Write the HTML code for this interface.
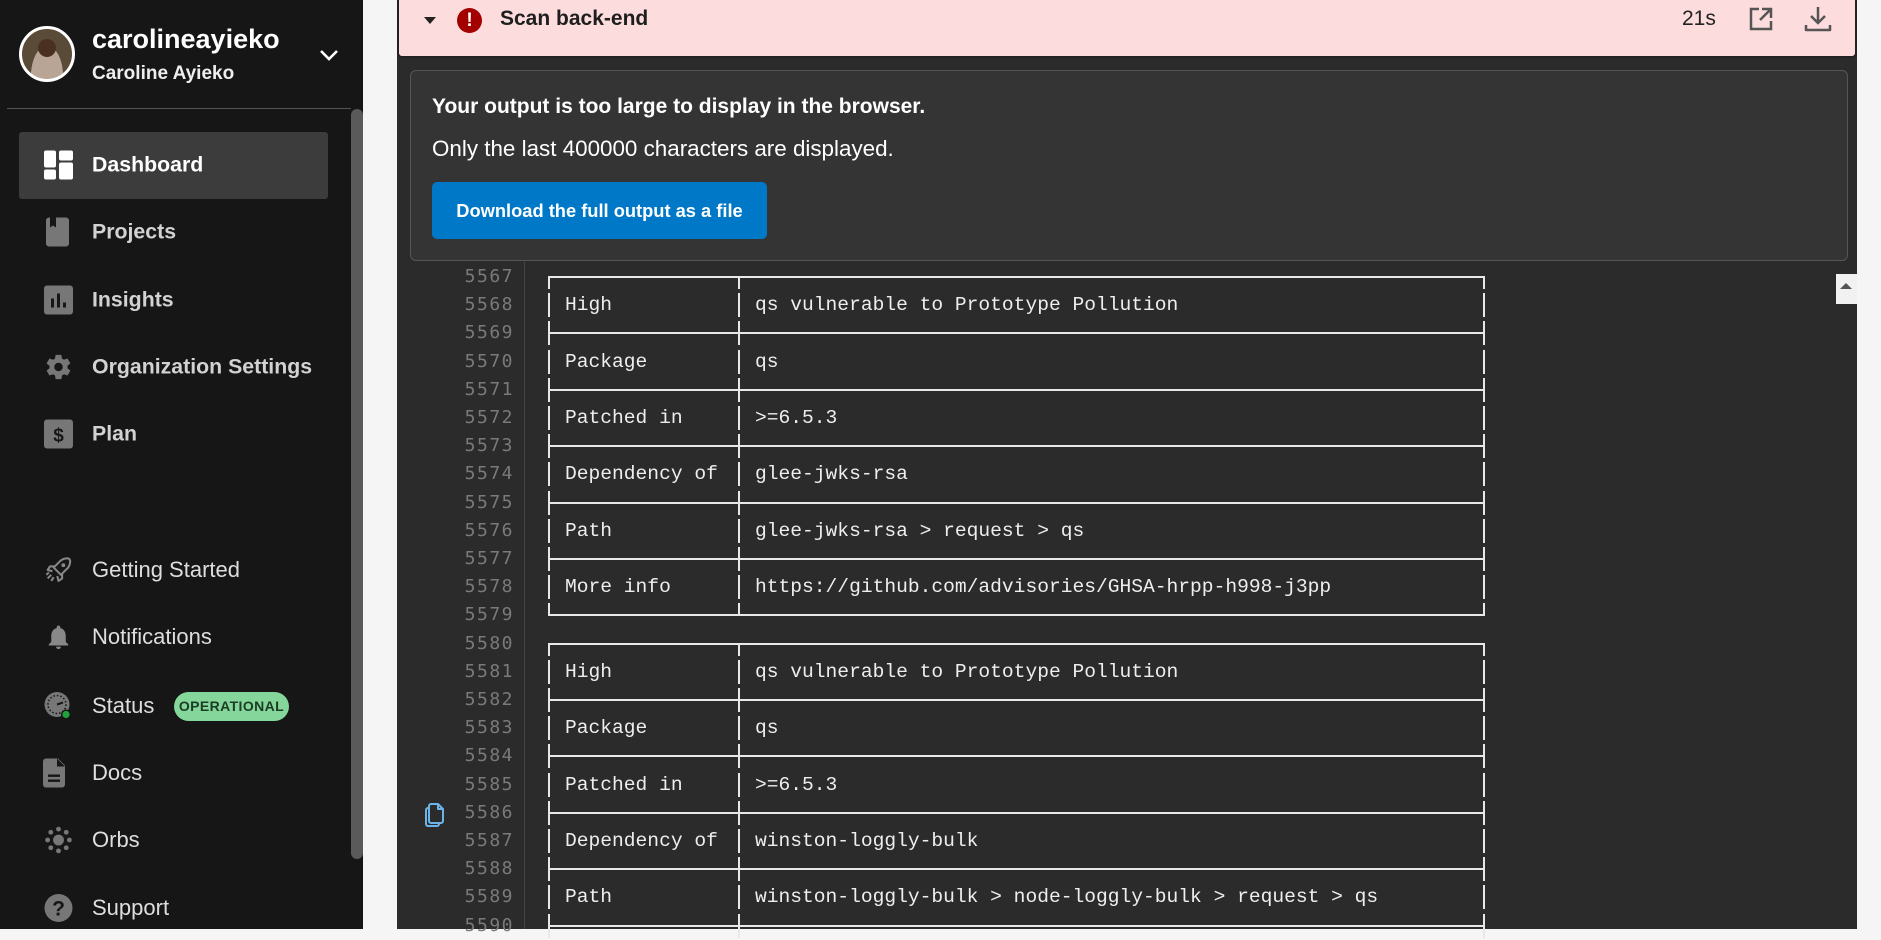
<!DOCTYPE html>
<html><head><meta charset="utf-8">
<style>
*{margin:0;padding:0;box-sizing:border-box}
body{width:1881px;height:929px;overflow:hidden;background:#f5f5f5;font-family:"Liberation Sans",Arial,sans-serif;position:relative}
.sb{position:absolute;left:0;top:0;width:363px;height:929px;background:#161616}
.abs{position:absolute}
.nav{position:absolute;left:92px;font-size:21.3px;font-weight:bold;color:#d2d2d2;transform:translateY(-50%);white-space:nowrap}
.nav.n{font-weight:normal;color:#dedede;font-size:22px}
.ic{position:absolute;left:44px;transform:translateY(-50%)}
.main{position:absolute;left:397px;top:0;width:1460px;height:929px;background:#2b2b2b}
.hdr{position:absolute;left:397px;top:0;width:1460px;height:58px;background:#fcdcdc;border:2px solid #222;border-top:none;border-radius:0 0 5px 5px}
.ln{position:absolute;left:0;width:1460px;height:28.2px}
.num{position:absolute;left:430px;width:84px;text-align:right;font-family:"DejaVu Sans Mono","Liberation Mono",monospace;font-size:18px;color:#7a7a7a;top:3px;letter-spacing:1.5px}
.tx{position:absolute;top:3px;font-family:"Liberation Mono","Courier New",monospace;font-size:19.6px;color:#eee;white-space:pre}
.v{position:absolute;width:2px;background:#e8e8e8}
.h{position:absolute;left:548px;width:937px;height:2px;background:#e8e8e8;top:13px}
</style></head><body>
<div class="sb">
  <div class="abs" style="left:19px;top:26px;width:56px;height:56px;border-radius:50%;border:3px solid #fff;background:radial-gradient(circle at 50% 38%,#4a3020 0 22%,transparent 23%),radial-gradient(ellipse at 50% 95%,#b8a595 0 45%,transparent 46%),#5a4a38;overflow:hidden"></div>
  <div class="abs" style="left:92px;top:24px;font-size:27px;font-weight:bold;color:#fff">carolineayieko</div>
  <div class="abs" style="left:92px;top:63px;font-size:19px;font-weight:bold;color:#eee">Caroline Ayieko</div>
  <svg class="abs" style="left:318px;top:48px" width="22" height="14" viewBox="0 0 22 14"><path d="M3 3l8 8 8-8" stroke="#fff" stroke-width="2.6" fill="none"/></svg>
  <div class="abs" style="left:7px;top:108px;width:344px;height:1px;background:#555"></div>
  <div class="abs" style="left:351px;top:109px;width:12px;height:750px;background:#5a5a5a;border-radius:6px"></div>
  <div class="abs" style="left:19px;top:132px;width:309px;height:67px;background:#3c3c3c;border-radius:3px"></div>

  <svg class="ic" style="top:165px" width="29" height="29" viewBox="0 0 29 29"><rect x="0" y="0" width="12" height="17" rx="2" fill="#fff"/><rect x="15" y="0" width="14" height="10" rx="2" fill="#fff"/><rect x="0" y="19" width="12" height="10" rx="2" fill="#fff"/><rect x="15" y="12" width="14" height="17" rx="2" fill="#fff"/></svg>
  <div class="nav" style="top:165px;color:#fff">Dashboard</div>

  <svg class="ic" style="top:232px;left:46px" width="24" height="29" viewBox="0 0 24 29"><rect width="23" height="29" rx="3" fill="#777"/><path d="M4 0h6v10l-3-2-3 2z" fill="#161616"/></svg>
  <div class="nav" style="top:232px">Projects</div>

  <svg class="ic" style="top:300px" width="29" height="29" viewBox="0 0 29 29"><rect width="29" height="29" rx="3" fill="#777"/><rect x="7" y="13" width="3" height="9" fill="#161616"/><rect x="13" y="8" width="3" height="14" fill="#161616"/><rect x="19" y="17" width="3" height="5" fill="#161616"/></svg>
  <div class="nav" style="top:300px">Insights</div>

  <svg class="ic" style="top:367px" width="29" height="29" viewBox="0 0 24 24"><path fill="#777" d="M19.4 13c.04-.3.06-.65.06-1s-.02-.7-.06-1l2.1-1.65c.2-.15.24-.42.12-.64l-2-3.46c-.12-.22-.39-.3-.61-.22l-2.49 1c-.52-.4-1.08-.73-1.69-.98l-.38-2.65A.49.49 0 0 0 14 2h-4c-.25 0-.46.18-.49.42l-.38 2.65c-.61.25-1.17.59-1.69.98l-2.49-1c-.23-.09-.49 0-.61.22l-2 3.46c-.13.22-.07.49.12.64L4.57 11c-.04.32-.07.66-.07 1s.03.68.07 1l-2.11 1.65c-.19.15-.24.42-.12.64l2 3.46c.12.22.39.3.61.22l2.49-1c.52.4 1.08.73 1.69.98l.38 2.65c.03.24.24.42.49.42h4c.25 0 .46-.18.49-.42l.38-2.65c.61-.25 1.17-.59 1.69-.98l2.49 1c.23.09.49 0 .61-.22l2-3.46c.12-.22.07-.49-.12-.64zM12 15.5a3.5 3.5 0 1 1 0-7 3.5 3.5 0 0 1 0 7z"/></svg>
  <div class="nav" style="top:367px">Organization Settings</div>

  <svg class="ic" style="top:434px" width="29" height="29" viewBox="0 0 29 29"><rect width="29" height="29" rx="3" fill="#777"/><text x="14.5" y="22" text-anchor="middle" font-family="Liberation Sans" font-weight="bold" font-size="19" fill="#161616">$</text></svg>
  <div class="nav" style="top:434px">Plan</div>

  <svg class="ic" style="top:570px" width="29" height="29" viewBox="0 0 24 24"><path d="M14 4c3-2 6-2 7-1 1 1 1 4-1 7l-6 6-6-6zM9 9l-4 0-2 3 4 1M15 15l0 4-3 2-1-4M6 16l-3 3M8 18l-2 3M4 14l-2 2" stroke="#888" stroke-width="1.7" fill="none" stroke-linejoin="round"/><circle cx="16" cy="8" r="1.6" fill="#888"/></svg>
  <div class="nav n" style="top:570px">Getting Started</div>

  <svg class="ic" style="top:637px" width="29" height="29" viewBox="0 0 24 24"><path fill="#888" d="M12 22c1.1 0 2-.9 2-2h-4c0 1.1.9 2 2 2zm6-6v-5c0-3.07-1.64-5.64-4.5-6.32V4c0-.83-.67-1.5-1.5-1.5s-1.5.67-1.5 1.5v.68C7.63 5.36 6 7.92 6 11v5l-2 2v1h16v-1z"/></svg>
  <div class="nav n" style="top:637px">Notifications</div>

  <svg class="ic" style="top:706px" width="29" height="29" viewBox="0 0 29 29"><circle cx="13" cy="13" r="12.5" fill="#777"/><circle cx="13" cy="13" r="9" fill="none" stroke="#161616" stroke-width="1.5" stroke-dasharray="1.5 2"/><path d="M13 13l6-2" stroke="#161616" stroke-width="2"/><circle cx="22" cy="23" r="5" fill="#161616"/><circle cx="22" cy="23" r="3.6" fill="#1fa33a"/></svg>
  <div class="nav n" style="top:706px">Status</div>
  <div class="abs" style="left:174px;top:692px;width:115px;height:29px;border-radius:15px;background:#85d69a;color:#1c3d24;font-size:14px;font-weight:bold;text-align:center;line-height:29px;letter-spacing:.4px">OPERATIONAL</div>

  <svg class="ic" style="top:773px;left:43px" width="24" height="29" viewBox="0 0 24 29"><path d="M3 0h12l7 7v19a3 3 0 0 1-3 3H3a3 3 0 0 1-3-3V3a3 3 0 0 1 3-3z" fill="#777"/><path d="M14 0v8h8" fill="#161616"/><rect x="5" y="16" width="12" height="2.4" fill="#161616"/><rect x="5" y="21" width="12" height="2.4" fill="#161616"/></svg>
  <div class="nav n" style="top:773px">Docs</div>

  <svg class="ic" style="top:840px" width="29" height="29" viewBox="0 0 24 24" fill="#777"><circle cx="12" cy="12" r="4.5"/><circle cx="12" cy="3" r="2"/><circle cx="12" cy="21" r="2"/><circle cx="3" cy="12" r="2"/><circle cx="21" cy="12" r="2"/><circle cx="5.6" cy="5.6" r="2"/><circle cx="18.4" cy="5.6" r="2"/><circle cx="5.6" cy="18.4" r="2"/><circle cx="18.4" cy="18.4" r="2"/></svg>
  <div class="nav n" style="top:840px">Orbs</div>

  <svg class="ic" style="top:908px" width="29" height="29" viewBox="0 0 29 29"><circle cx="14.5" cy="14.5" r="14" fill="#777"/><text x="14.5" y="22" text-anchor="middle" font-family="Liberation Sans" font-weight="bold" font-size="21" fill="#161616">?</text></svg>
  <div class="nav n" style="top:908px">Support</div>
</div>

<div class="main">
  <div class="abs" style="left:13px;top:70px;width:1438px;height:191px;background:#343434;border:1px solid #555;border-radius:6px"></div>
  <div class="abs" style="left:35px;top:95px;font-size:21px;font-weight:bold;color:#fff">Your output is too large to display in the browser.</div>
  <div class="abs" style="left:35px;top:136px;font-size:22.4px;color:#fff">Only the last 400000 characters are displayed.</div>
  <div class="abs" style="left:35px;top:182px;width:335px;height:57px;background:#0078c8;border-radius:5px;color:#fff;font-size:18.3px;font-weight:bold;line-height:57px;text-align:center">Download the full output as a file</div>
  <div class="abs" style="left:1439px;top:274px;width:21px;height:30px;background:#f1f1f1"></div>
  <svg class="abs" style="left:1442px;top:281px" width="14" height="10"><path d="M1 8l6-6 6 6z" fill="#555"/></svg>
  <div class="abs" style="left:127px;top:262px;width:1px;height:667px;background:#454545"></div>
  <svg class="abs" style="left:28px;top:802px" width="20" height="26" viewBox="0 0 20 26"><path d="M4 6H3a2 2 0 0 0-2 2v14a2 2 0 0 0 2 2h9a2 2 0 0 0 2-2v-1" stroke="#6cb4ea" stroke-width="2" fill="none"/><path d="M6 2h7l5 5v12a2 2 0 0 1-2 2H6a2 2 0 0 1-2-2V4a2 2 0 0 1 2-2zM13 2v5h5" stroke="#6cb4ea" stroke-width="2" fill="none" stroke-linejoin="round"/></svg>
  <div id="log" class="abs" style="left:-397px;top:263px;width:1860px"></div>
</div>

<div class="hdr">
  <svg class="abs" style="left:24px;top:16px" width="14" height="10"><path d="M1 1h12L7 8z" fill="#222"/></svg>
  <div class="abs" style="left:58px;top:8px;width:25px;height:25px;border-radius:50%;background:#a30000;color:#fff;font-weight:bold;font-size:19px;text-align:center;line-height:25px">!</div>
  <div class="abs" style="left:101px;top:7px;font-size:21px;font-weight:bold;color:#1e1e1e">Scan back-end</div>
  <div class="abs" style="left:1283px;top:7px;font-size:21px;color:#222">21s</div>
  <svg class="abs" style="left:1350px;top:7px" width="24" height="24" viewBox="0 0 24 24"><path d="M10 2H2v20h20v-8" stroke="#555" stroke-width="2.5" fill="none"/><path d="M13 2h9v9M22 2L11 13" stroke="#555" stroke-width="2.5" fill="none"/></svg>
  <svg class="abs" style="left:1405px;top:5px" width="28" height="28" viewBox="0 0 28 28"><path d="M14 2v16M7 11l7 7 7-7" stroke="#555" stroke-width="2.5" fill="none"/><path d="M2 20v5h24v-5" stroke="#555" stroke-width="2.5" fill="none" stroke-linejoin="round"/></svg>
</div>

<script>
var rows=[['t'],['d','High','qs vulnerable to Prototype Pollution'],['s'],['d','Package','qs'],['s'],['d','Patched in','>=6.5.3'],['s'],['d','Dependency of','glee-jwks-rsa'],['s'],['d','Path','glee-jwks-rsa > request > qs'],['s'],['d','More info','https://github.com/advisories/GHSA-hrpp-h998-j3pp'],['b'],
['t'],['d','High','qs vulnerable to Prototype Pollution'],['s'],['d','Package','qs'],['s'],['d','Patched in','>=6.5.3'],['s'],['d','Dependency of','winston-loggly-bulk'],['s'],['d','Path','winston-loggly-bulk > node-loggly-bulk > request > qs'],['s']];
var h='';
rows.forEach(function(r,i){
 var top=(i*28.2).toFixed(1);
 h+='<div class="ln" style="top:'+top+'px"><div class="num">'+(5567+i)+'</div>';
 var vt=2,vh=24;
 if(r[0]=='t'){vt=13;vh=13;}
 if(r[0]=='b'){vt=2;vh=13;}
 [548,738,1483].forEach(function(x){h+='<div class="v" style="left:'+x+'px;top:'+vt+'px;height:'+vh+'px"></div>';});
 if(r[0]!='d')h+='<div class="h"></div>';
 else h+='<div class="tx" style="left:565px">'+r[1]+'</div><div class="tx" style="left:755px">'+r[2].replace(/>/g,'&gt;')+'</div>';
 h+='</div>';
});
document.getElementById('log').innerHTML=h;
</script>
</body></html>
